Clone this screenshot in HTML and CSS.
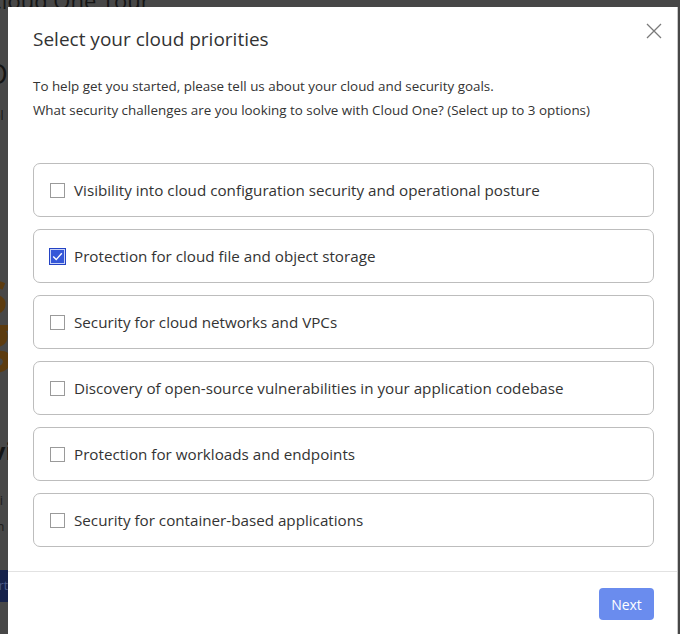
FILE: index.html
```html
<!DOCTYPE html>
<html>
<head>
<meta charset="utf-8">
<link rel="stylesheet" href="styles.css">
</head>
<body>
<div class="page">
  <div class="bg-title">Cloud One Tour</div>
  <div class="bg-big">O</div>
  <div class="bg-small">Control</div>
  <div class="bg-brand"><span>s</span><span>g</span></div>
  <div class="bg-head">Overvi</div>
  <div class="bg-text">Read di</div>
  <div class="bg-text second">Learn</div>
  <div class="bg-btn">Start</div>
</div>

<div class="modal" role="dialog">
  <button class="close" aria-label="Close">
    <svg width="16" height="16" viewBox="0 0 16 16"><path d="M1 1 L15 15 M15 1 L1 15" stroke="#7a7a7a" stroke-width="1.3" fill="none"/></svg>
  </button>
  <div class="body">
    <h2 class="title">Select your cloud priorities</h2>
    <p class="intro">To help get you started, please tell us about your cloud and security goals.<br>What security challenges are you looking to solve with Cloud One? (Select up to 3 options)</p>
    <div class="options">
      <label class="option"><span class="box"></span><span class="label">Visibility into cloud configuration security and operational posture</span></label>
      <label class="option"><span class="box checked"><svg width="15" height="15" viewBox="0 0 15 15"><path d="M3.2 7.6 L6.2 10.6 L11.8 4.2" stroke="#fff" stroke-width="1.4" fill="none"/></svg></span><span class="label">Protection for cloud file and object storage</span></label>
      <label class="option"><span class="box"></span><span class="label">Security for cloud networks and VPCs</span></label>
      <label class="option"><span class="box"></span><span class="label">Discovery of open-source vulnerabilities in your application codebase</span></label>
      <label class="option"><span class="box"></span><span class="label">Protection for workloads and endpoints</span></label>
      <label class="option"><span class="box"></span><span class="label">Security for container-based applications</span></label>
    </div>
  </div>
  <div class="footer">
    <button class="next">Next</button>
  </div>
</div>
</body>
</html>
```
FILE: styles.css
```css
html, body {
  margin: 0;
  padding: 0;
  height: 100%;
  overflow: hidden;
}
body {
  background: #474747;
  font-family: "Open Sans", "Noto Sans", sans-serif;
  color: #333;
}
.page {
  width: 680px;
  height: 634px;
  overflow: hidden;
  color: #141414;
}
.bg-title {
  margin: -12px 0 0 -12px;
  font-size: 22px;
  line-height: 24px;
  color: #151515;
}
.bg-big {
  margin: 46px 0 0 -14px;
  font-size: 28px;
  line-height: 30px;
}
.bg-small {
  margin: 20px 0 0 -38px;
  font-size: 12px;
  line-height: 16px;
}
.bg-brand {
  margin: 145px 0 0 -22px;
  display: flex;
  flex-direction: column;
  font-size: 60px;
  line-height: 44px;
  font-weight: 700;
  color: #5c3b0f;
}
.bg-head {
  margin: 79px 0 0 -66px;
  font-size: 24px;
  line-height: 30px;
  font-weight: 700;
}
.bg-text {
  margin: 27px 0 0 -42px;
  font-size: 13px;
  line-height: 14px;
  color: #1c1c1c;
}
.bg-text.second {
  margin-top: 12px;
  margin-left: -30px;
}
.bg-btn {
  margin: 37px 0 0 -30px;
  width: 38px;
  height: 32px;
  background: #16224a;
  color: #4a5a8a;
  font-size: 12px;
  line-height: 32px;
  text-align: right;
  padding-right: 2px;
}

.modal {
  position: absolute;
  left: 8px;
  top: 7px;
  width: 670px;
  height: 640px;
  background: #fff;
  border-right: 1px solid #c9c9c9;
  box-sizing: border-box;
}
.close {
  position: absolute;
  top: 16px;
  right: 15px;
  width: 16px;
  height: 16px;
  padding: 0;
  border: 0;
  background: none;
  display: flex;
}
.body {
  padding: 19px 23px 0 25px;
}
.title {
  margin: 0;
  font-size: 19px;
  font-weight: 400;
  line-height: 26px;
  color: #333;
}
.intro {
  margin: 22px 0 0;
  font-size: 13.4px;
  line-height: 24px;
  color: #333;
}
.options {
  margin-top: 41px;
  display: flex;
  flex-direction: column;
  gap: 12px;
}
.option {
  height: 54px;
  box-sizing: border-box;
  border: 1px solid #bdbdbd;
  border-radius: 7px;
  display: flex;
  align-items: center;
  padding-left: 16px;
  gap: 9px;
}
.box {
  width: 15px;
  height: 15px;
  box-sizing: border-box;
  border: 1px solid #9a9a9a;
  background: #fff;
  display: flex;
  flex: none;
}
.box.checked {
  width: 17px;
  height: 17px;
  margin: 0 -1px 0 -1px;
  background: #3557d8;
  border: 1px solid #2443c4;
  box-shadow: inset 0 0 0 1px #c9d3f7;
  align-items: center;
  justify-content: center;
}
.label {
  font-size: 15.2px;
  color: #333;
}
.footer {
  margin-top: 24px;
  border-top: 1px solid #e2e2e2;
  padding: 16px 23px 0 0;
  display: flex;
  justify-content: flex-end;
}
.next {
  width: 55px;
  height: 32px;
  border: 0;
  border-radius: 4px;
  background: #6a8cee;
  color: #fff;
  font-family: "Open Sans", "Noto Sans", sans-serif;
  font-size: 14px;
  padding: 0;
}
```
